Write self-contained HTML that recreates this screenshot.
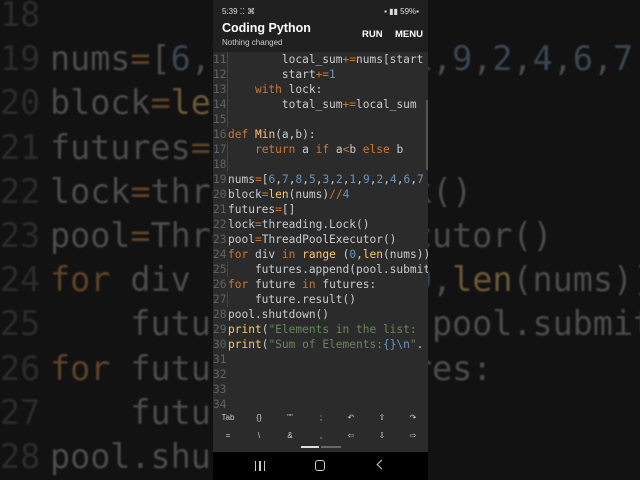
<!DOCTYPE html>
<html><head><meta charset="utf-8"><style>
*{margin:0;padding:0;box-sizing:border-box}
body{width:640px;height:480px;overflow:hidden;background:#121212;position:relative;font-family:"DejaVu Sans Mono","Liberation Mono",monospace}
.bg{position:absolute;left:0;top:-7px;font-size:33.4px;line-height:44.2px;white-space:pre;color:#4c4c4c;filter:blur(0.8px)}
.bg .n{color:#2c2c2c;display:inline-block;width:50px}
.bg .k{color:#5e4328}.bg .d{color:#3c4754}.bg .f{color:#6a5a36}.bg .o{color:#5e4328}.bg .s{color:#3c4a37}
.ph{position:absolute;left:213px;top:0;width:215px;height:480px;background:#2b2b2b;overflow:hidden}
.sb{height:20px;background:#202020;color:#ddd;font:8px "Liberation Sans",sans-serif;padding:7px 9px 0}
.hd{height:32px;background:#202020;position:relative;font-family:"Liberation Sans",sans-serif;color:#fff}
.hd .t{position:absolute;left:9px;top:1px;font-size:12.5px;font-weight:bold}
.hd .st{position:absolute;left:9px;top:18px;font-size:8px;color:#ccc}
.hd .b{position:absolute;top:9px;font-size:9.5px;font-weight:bold}
.ed{position:absolute;top:52px;left:0;width:215px;font-size:11.2px;line-height:15px;white-space:pre;color:#c8ccd0}
.ln{display:inline-block;width:15px;color:#5f6366;text-align:left;border-right:1px solid #444;margin-right:0}
.g{border-left:1px solid #444}
.k{color:#cc7832}.d{color:#6897bb}.f{color:#ffc66d}.s{color:#6a8759}.o{color:#cc7832}
.tb{position:absolute;top:408px;left:0;width:215px;height:44px;background:#2b2b2b;font:8px "Liberation Sans",sans-serif;color:#ccc}
.tb span{position:absolute;width:20px;text-align:center;margin-left:-10px}
.nav{position:absolute;top:452px;left:0;width:215px;height:28px;background:#000}
</style></head><body>
<div class="bg"><span class="n">18</span>
<span class="n">19</span>nums<span class="o">=</span>[<span class="d">6</span>,<span class="d">7</span>,<span class="d">8</span>,<span class="d">5</span>,<span class="d">3</span>,<span class="d">2</span>,<span class="d">1</span>,<span class="d">9</span>,<span class="d">2</span>,<span class="d">4</span>,<span class="d">6</span>,<span class="d">7</span>
<span class="n">20</span>block<span class="o">=</span><span class="f">len</span>(nums)<span class="o">//</span><span class="d">4</span>
<span class="n">21</span>futures<span class="o">=</span>[]
<span class="n">22</span>lock<span class="o">=</span>threading.Lock()
<span class="n">23</span>pool<span class="o">=</span>ThreadPoolExecutor()
<span class="n">24</span><span class="k">for</span> div <span class="k">in</span> <span class="f">range</span> (<span class="d">0</span>,<span class="f">len</span>(nums))
<span class="n">25</span>    futures.append(pool.submit
<span class="n">26</span><span class="k">for</span> future <span class="k">in</span> futures:
<span class="n">27</span>    future.result()
<span class="n">28</span>pool.shutdown()</div>
<div class="ph">
<div class="sb">5:39 ⁚⁚ ⌘<span style="float:right">▪ ▮▮ 59%▪</span></div>
<div class="hd"><div class="t">Coding Python</div><div class="st">Nothing changed</div><div class="b" style="left:149px">RUN</div><div class="b" style="left:182px">MENU</div></div>
<div class="ed"><span class="ln">11</span>        local_sum<span class="o">+=</span>nums[start
<span class="ln">12</span>        start<span class="o">+=</span><span class="d">1</span>
<span class="ln">13</span>    <span class="k">with</span> lock:
<span class="ln">14</span>        total_sum<span class="o">+=</span>local_sum
<span class="ln">15</span>
<span class="ln" style="border:0">16</span><span class="k">def</span> <span class="f">Min</span>(a,b):
<span class="ln">17</span>    <span class="k">return</span> a <span class="k">if</span> a<span class="o">&lt;</span>b <span class="k">else</span> b
<span class="ln">18</span>
<span class="ln" style="border:0">19</span>nums<span class="o">=</span>[<span class="d">6</span>,<span class="d">7</span>,<span class="d">8</span>,<span class="d">5</span>,<span class="d">3</span>,<span class="d">2</span>,<span class="d">1</span>,<span class="d">9</span>,<span class="d">2</span>,<span class="d">4</span>,<span class="d">6</span>,<span class="d">7</span>
<span class="ln" style="border:0">20</span>block<span class="o">=</span><span class="f">len</span>(nums)<span class="o">//</span><span class="d">4</span>
<span class="ln" style="border:0">21</span>futures<span class="o">=</span>[]
<span class="ln" style="border:0">22</span>lock<span class="o">=</span>threading.Lock()
<span class="ln" style="border:0">23</span>pool<span class="o">=</span>ThreadPoolExecutor()
<span class="ln" style="border:0">24</span><span class="k">for</span> div <span class="k">in</span> <span class="f">range</span> (<span class="d">0</span>,<span class="f">len</span>(nums))
<span class="ln">25</span>    futures.append(pool.submit
<span class="ln" style="border:0">26</span><span class="k">for</span> future <span class="k">in</span> futures:
<span class="ln">27</span>    future.result()
<span class="ln" style="border:0">28</span>pool.shutdown()
<span class="ln" style="border:0">29</span><span class="f">print</span>(<span class="s">"Elements in the list: </span>
<span class="ln" style="border:0">30</span><span class="f">print</span>(<span class="s">"Sum of Elements:</span><span class="d">{}\n</span><span class="s">"</span>.
<span class="ln" style="border:0">31</span>
<span class="ln" style="border:0">32</span>
<span class="ln" style="border:0">33</span>
<span class="ln" style="border:0">34</span></div>
<div style="position:absolute;left:213px;top:100px;width:2px;height:70px;background:#555"></div>
<div class="tb">
<span style="left:15px;top:5px">Tab</span><span style="left:46px;top:5px">{}</span><span style="left:77px;top:5px">""</span><span style="left:108px;top:5px">;</span><span style="left:138px;top:5px">↶</span><span style="left:169px;top:5px">⇧</span><span style="left:200px;top:5px">↷</span>
<span style="left:15px;top:23px">=</span><span style="left:46px;top:23px">\</span><span style="left:77px;top:23px">&amp;</span><span style="left:108px;top:23px">,</span><span style="left:138px;top:23px">⇦</span><span style="left:169px;top:23px">⇩</span><span style="left:200px;top:23px">⇨</span>
<div style="position:absolute;left:88px;top:38px;width:18px;height:2px;background:#ddd"></div>
<div style="position:absolute;left:108px;top:38px;width:20px;height:2px;background:#666"></div>
</div>
<div class="nav">
<div style="position:absolute;left:42px;top:9px;width:10px;height:10px;border-left:1.5px solid #ccc;border-right:1.5px solid #ccc"><div style="margin:0 auto;width:1.5px;height:10px;background:#ccc"></div></div>
<div style="position:absolute;left:102px;top:8px;width:10px;height:11px;border:1.5px solid #ccc;border-radius:3px"></div>
<div style="position:absolute;left:165px;top:9px;width:7px;height:7px;border-left:1.5px solid #ccc;border-bottom:1.5px solid #ccc;transform:rotate(45deg)"></div>
</div>
</div>
</body></html>
